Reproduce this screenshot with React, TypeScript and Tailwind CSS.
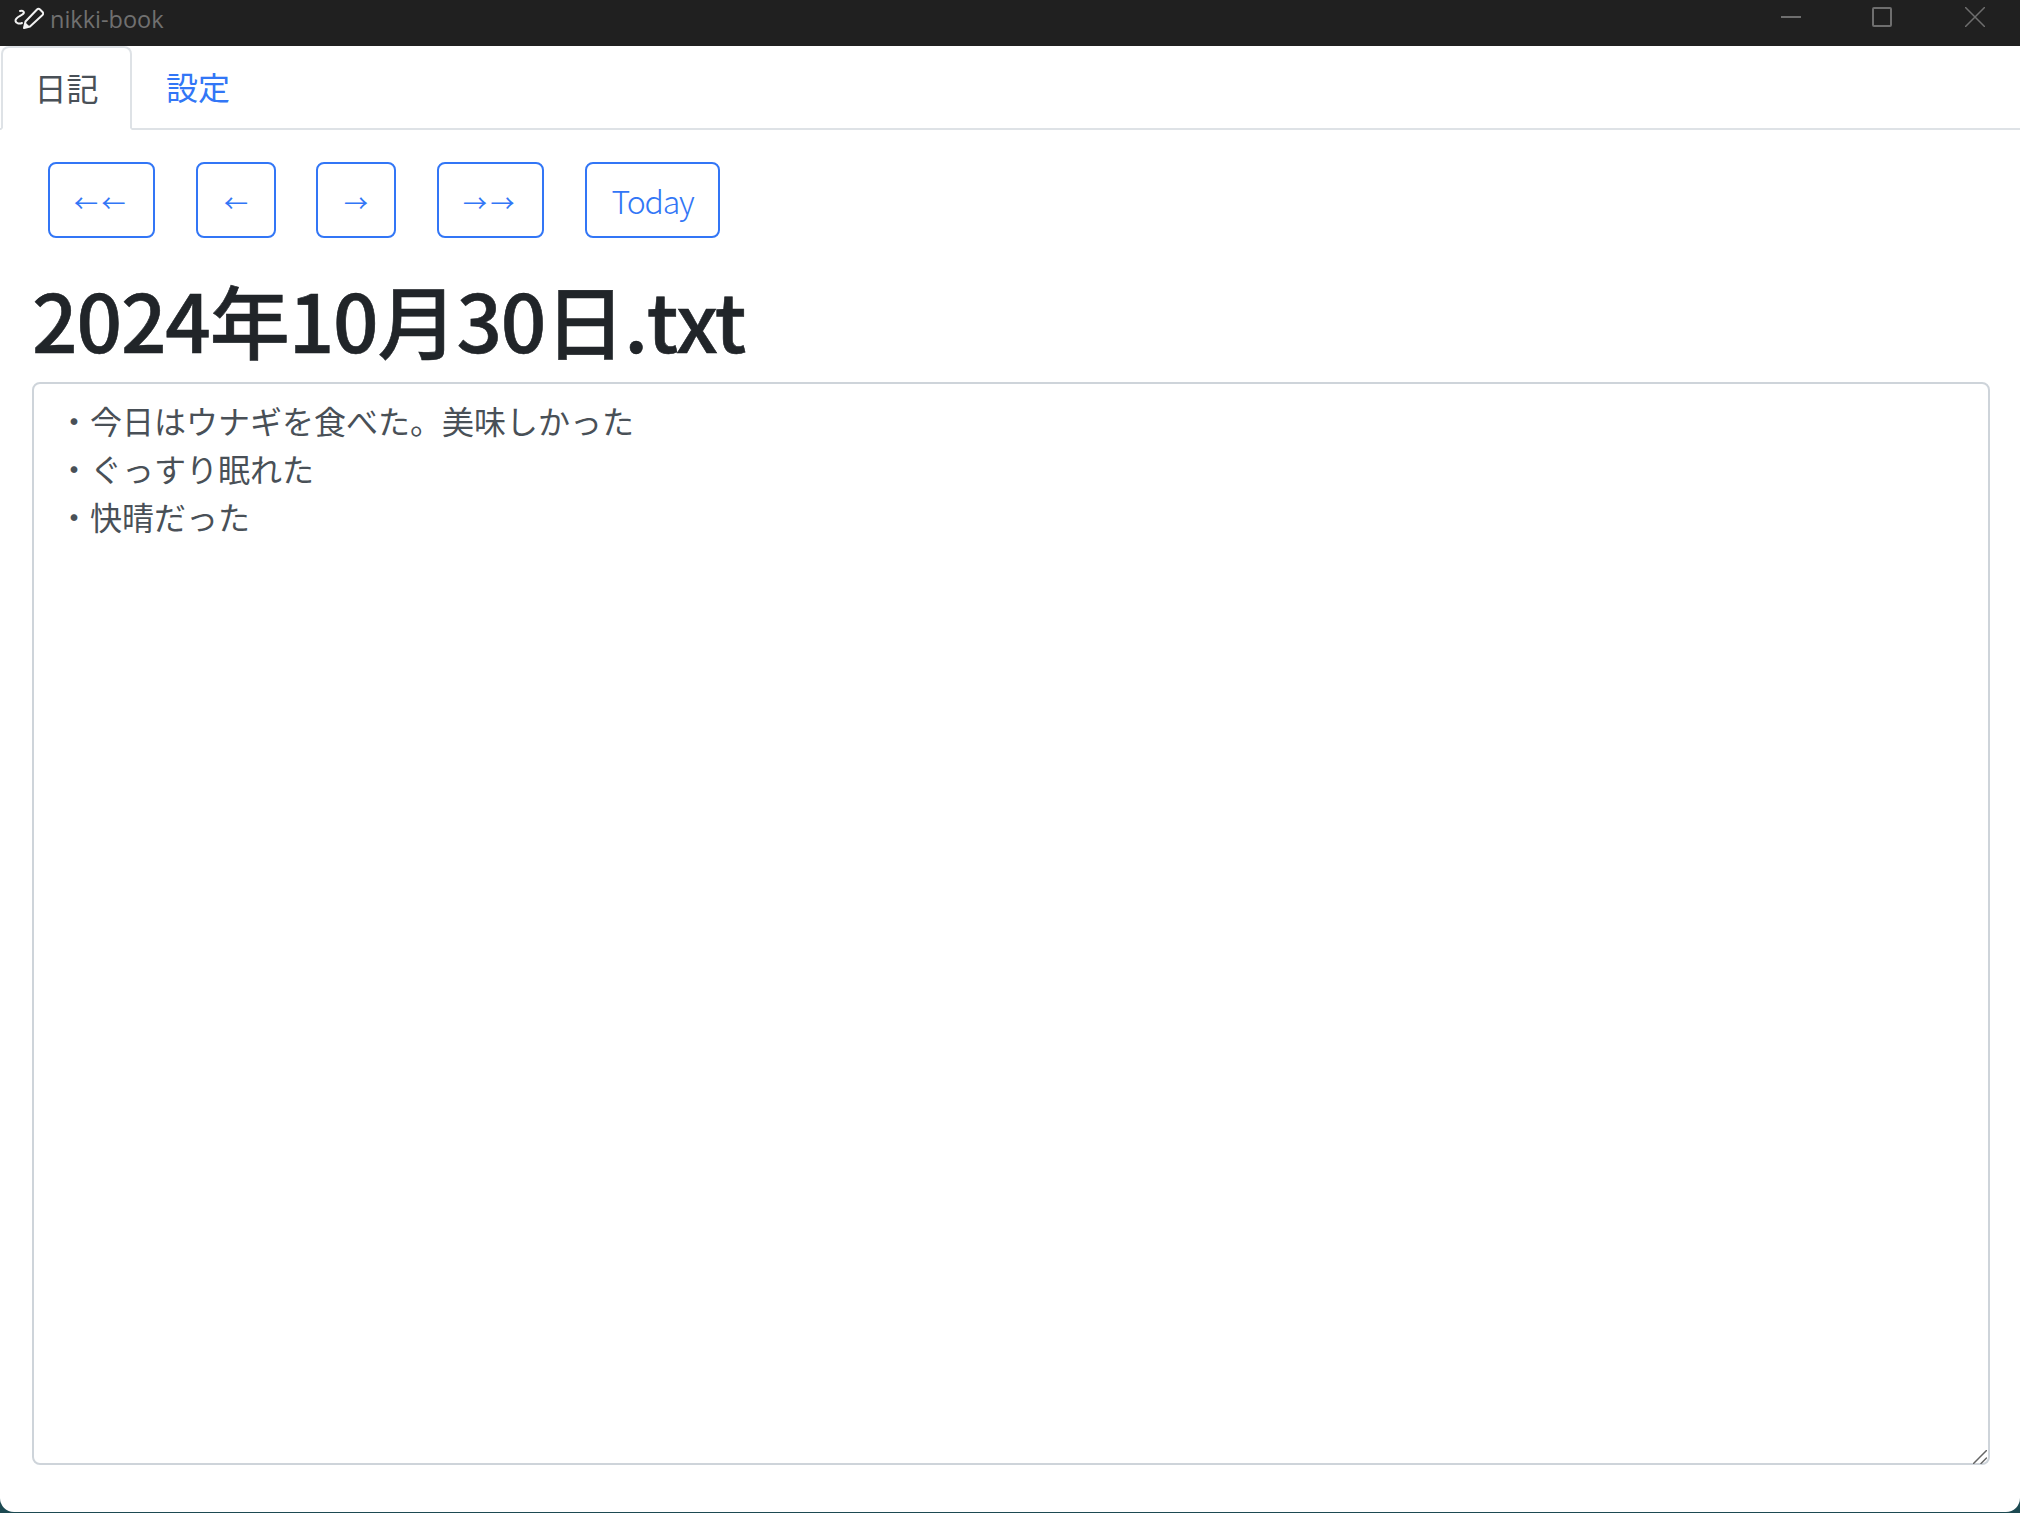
import React from 'react'

const cjk = { fontFamily: '"Noto Sans CJK JP", "Noto Sans", sans-serif' }

const buttons = [
  { label: '←←', cls: 'w-[107px] ml-4 pt-[4px] text-[24px] tracking-[3.5px]' },
  { label: '←', cls: 'w-[80px] ml-[41px] pt-[4px] text-[24px]' },
  { label: '→', cls: 'w-[80px] ml-[40px] pt-[4px] text-[24px]' },
  { label: '→→', cls: 'w-[107px] ml-[41px] pt-[4px] text-[24px] tracking-[3.5px]' },
  { label: 'Today', cls: 'w-[135px] ml-[41px] text-[32px] font-light tracking-[-1.2px]' },
]

function TitleBar() {
  return (
    <div className="flex h-[46px] items-start bg-[#202020]">
      <svg className="ml-[14px] mt-[7px]" width="30" height="22" viewBox="0 0 30 22" fill="none">
        <path d="M6 4 C9 3 11 5 9 7 C7 9 1 10 1.500 14 C2 17 6 17 8 16" stroke="#f2f2f2" strokeWidth="2" strokeLinecap="round" />
        <path d="M10 21 L11.500 14.500 L23 2.500 C24 1.500 25 1.500 26 2.500 L28.500 5 C29.500 6 29.500 7 28.500 8 L16 19.500 Z" stroke="#f2f2f2" strokeWidth="2" strokeLinejoin="round" />
        <path d="M10 21 L11.500 15.500 L15.500 19.500 Z" fill="#f2f2f2" />
      </svg>
      <span className="ml-[6px] mt-[3px] text-[23.500px] leading-[32px] text-[#707070]" style={{ fontFamily: '"Open Sans", sans-serif' }}>nikki-book</span>
      <div className="ml-auto flex items-start">
        <div className="mt-[16px] mr-[71px] h-[2px] w-[20px] bg-[#6e6e6e]" />
        <div className="mt-[7px] mr-[73px] h-[20px] w-[20px] rounded-[2px] border-2 border-[#6e6e6e]" />
        <svg className="mt-[7px] mr-[35px]" width="20" height="20" viewBox="0 0 20 20" stroke="#6e6e6e" strokeWidth="1.500">
          <path d="M0 0 L20 20 M20 0 L0 20" />
        </svg>
      </div>
    </div>
  )
}

function Tabs() {
  return (
    <div className="flex h-[84px] border-b-2 border-[#dee2e6] pl-px text-[32px] leading-[48px]">
      <div className="-mb-[2px] h-[84px] w-[131px] rounded-t-lg border-2 border-[#dee2e6] border-b-white bg-white pt-[15px] text-center text-[#495057]">日記</div>
      <div className="py-[16px] pl-[34px] text-[#3276f6]">設定</div>
    </div>
  )
}

export default function App() {
  return (
    <div className="h-[1513px] w-[2020px] overflow-hidden bg-[#1d4a52]" style={cjk}>
      <div className="h-[1512px] overflow-hidden rounded-b-[14px] bg-white">
        <TitleBar />
        <Tabs />
        <div className="pl-[32px] pr-[30px]">
          <div className="flex pt-[32px]">
            {buttons.map((b) => (
              <button key={b.label} className={`h-[76px] rounded-lg border-2 border-[#3276f6] bg-white text-center leading-[48px] text-[#3276f6] ${b.cls}`}>
                {b.label}
              </button>
            ))}
          </div>
          <h1 className="mt-[32px] text-[80px] font-medium leading-[96px] tracking-[-1.15px] text-[#212529] [-webkit-text-stroke:0.6px_#212529]">2024年10月30日.txt</h1>
          <div className="relative mt-[16px]">
            <textarea
              readOnly
              className="block h-[1083px] w-full resize-none rounded-lg border-2 border-[#ced4da] bg-white px-[24px] py-[12px] text-[32px] leading-[48px] text-[#495057] outline-none"
              defaultValue={'・今日はウナギを食べた。美味しかった\n・ぐっすり眠れた\n・快晴だった'}
            />
            {/* resize grip */}
            <svg className="absolute bottom-[1px] right-[3px]" width="14" height="14" viewBox="0 0 14 14" stroke="#666666" strokeWidth="1.500" strokeLinecap="round">
              <path d="M0.500 13.500 L13.500 0.500 M8 13.500 L13.500 8" />
            </svg>
          </div>
        </div>
      </div>
    </div>
  )
}
